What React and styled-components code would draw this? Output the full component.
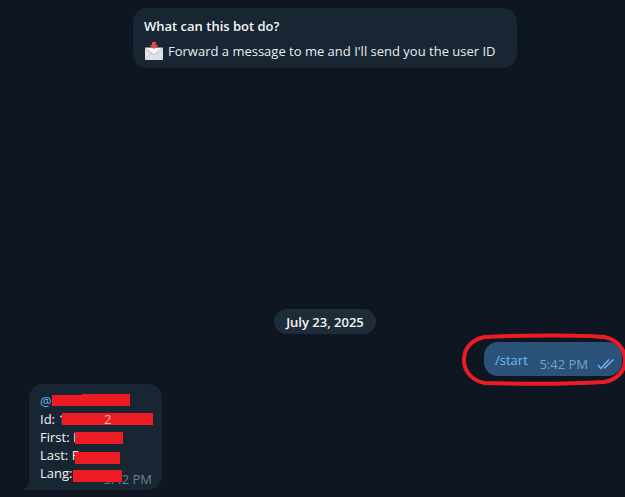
import React from "react";
import styled, { createGlobalStyle } from "styled-components";

const GlobalStyle = createGlobalStyle`
  html, body {
    margin: 0;
    padding: 0;
    background: #0e1621;
  }
`;

function MailIcon() {
  return (
    <Emoji viewBox="0 0 20 20">
      <rect x="1" y="6.500" width="18" height="12.500" rx="0.500" fill="#dfe3e6" />
      <path d="M1 7l9 7 9-7" fill="#f2f4f5" stroke="#aab1b6" strokeWidth="0.800" />
      <path d="M1 19l6.500-7M19 19l-6.500-7" stroke="#b9bfc3" strokeWidth="0.700" fill="none" />
      <path d="M8 1h4v3h2.500L10 8 5.500 4H8z" fill="#e8474a" />
    </Emoji>
  );
}

function DoubleCheck() {
  return (
    <Checks viewBox="0 0 18 12">
      <path d="M1 7l3 3.500L12 1.500" />
      <path d="M7 10.500L16.500 1.500" />
    </Checks>
  );
}

function App() {
  return (
    <Chat>
      <GlobalStyle />
      <InfoCard>
        <InfoTitle>What can this bot do?</InfoTitle>
        <InfoLine>
          <MailIcon />
          Forward a message to me and I'll send you the user ID
        </InfoLine>
      </InfoCard>
      <DatePill>July 23, 2025</DatePill>
      <OutRow>
        <OutBubble>
          <Command>/start</Command>
          <OutMeta>
            5:42 PM
            <DoubleCheck />
          </OutMeta>
          <Scribble viewBox="0 0 166 52">
            <path d="M24 3C60 1 120 1 143 3C155 5 164 14 164 26C164 38 155 46 143 48C110 50 60 50 24 49C12 47 3 38 3 26C3 13 12 5 24 3Z" />
          </Scribble>
        </OutBubble>
      </OutRow>
      <InRow>
        <InBubble>
          <Tail viewBox="0 0 9 10">
            <path d="M9 0v10H0c4-1 8-5 9-10z" />
          </Tail>
          <Line>
            <Mention>@</Mention>
            <Redact $left={12} $top={3} $width={78} $height={11} />
            <Redact $left={42} $top={2} $width={48} $height={12} />
          </Line>
          <Line>
            Id: 1
            <Redact $left={22} $top={3} $width={91} $height={12}>
              <Peek>2</Peek>
            </Redact>
          </Line>
          <Line>
            First: H
            <Redact $left={35} $top={4} $width={48} $height={12} />
          </Line>
          <Line>
            Last: F
            <Redact $left={35} $top={6} $width={45} $height={12} />
          </Line>
          <Line>
            Lang:
            <Redact $left={33} $top={6} $width={49} $height={12} />
          </Line>
          <InTime>5:42 PM</InTime>
        </InBubble>
      </InRow>
    </Chat>
  );
}

export default App;

const Chat = styled.div`
  width: 625px;
  height: 497px;
  box-sizing: border-box;
  padding: 8px 3px 7px 29px;
  display: flex;
  flex-direction: column;
  background: #0e1621;
  color: #f5f5f5;
  font-family: "Open Sans", "Noto Sans", sans-serif;
  font-size: 13px;
  overflow: hidden;
`;

const InfoCard = styled.div`
  align-self: flex-start;
  margin-left: 104px;
  width: 384px;
  height: 60px;
  box-sizing: border-box;
  padding: 9px 11px;
  background: #182533;
  border-radius: 14px;
`;

const InfoTitle = styled.div`
  font-weight: 600;
  line-height: 18px;
`;

const InfoLine = styled.div`
  margin-top: 6px;
  display: flex;
  align-items: center;
  line-height: 18px;
  color: #e9edf0;
`;

const Emoji = styled.svg`
  width: 20px;
  height: 20px;
  margin-right: 4px;
  flex: none;
`;

const DatePill = styled.div`
  align-self: flex-start;
  margin-top: auto;
  margin-left: 245px;
  width: 102px;
  height: 25px;
  display: flex;
  align-items: center;
  justify-content: center;
  background: #1e2c3a;
  border-radius: 13px;
  font-weight: 600;
`;

const OutRow = styled.div`
  display: flex;
  justify-content: flex-end;
  margin-top: 8px;
`;

const OutBubble = styled.div`
  position: relative;
  width: 138px;
  height: 34px;
  box-sizing: border-box;
  padding: 9px 11px;
  display: flex;
  justify-content: space-between;
  background: #2b5278;
  border-radius: 14px;
`;

const Command = styled.span`
  color: #78b9f2;
  font-size: 13px;
  line-height: 18px;
`;

const OutMeta = styled.span`
  display: flex;
  align-items: center;
  gap: 9px;
  margin: 5px -4px -5px 0;
  color: #7d9fc4;
  font-size: 13px;
  line-height: 18px;
`;

const Checks = styled.svg`
  width: 18px;
  height: 12px;
  fill: none;
  stroke: #78b9f2;
  stroke-width: 1.300;
`;

const Scribble = styled.svg`
  position: absolute;
  left: -23px;
  top: -8px;
  width: 166px;
  height: 52px;
  overflow: visible;
  fill: none;
  stroke: #ed1c24;
  stroke-width: 4;
  pointer-events: none;
`;

const InRow = styled.div`
  display: flex;
  margin-top: 8px;
`;

const InBubble = styled.div`
  position: relative;
  width: 133px;
  height: 106px;
  box-sizing: border-box;
  padding: 8px 11px;
  background: #182533;
  border-radius: 14px 14px 14px 0;
`;

const Tail = styled.svg`
  position: absolute;
  left: -8px;
  bottom: 0;
  width: 9px;
  height: 10px;
  fill: #182533;
`;

const Line = styled.div`
  position: relative;
  height: 18px;
  line-height: 18px;
  white-space: nowrap;
`;

const Mention = styled.span`
  color: #6ab3f3;
`;

const Redact = styled.span`
  position: absolute;
  left: ${(p) => p.$left}px;
  top: ${(p) => p.$top}px;
  width: ${(p) => p.$width}px;
  height: ${(p) => p.$height}px;
  background: #ed1c24;
  z-index: 2;
`;

const Peek = styled.span`
  position: absolute;
  left: 42px;
  top: -3px;
  color: #f9b4b4;
`;

const InTime = styled.span`
  position: absolute;
  right: 10px;
  bottom: 2px;
  color: #6d7f8f;
  font-size: 13px;
  line-height: 18px;
`;
